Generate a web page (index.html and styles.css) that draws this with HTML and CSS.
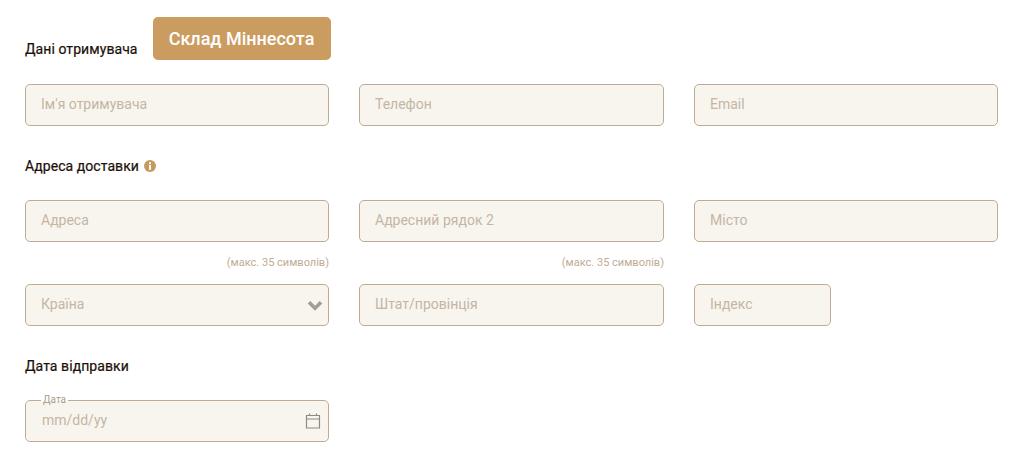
FILE: index.html
```html
<!DOCTYPE html>
<html lang="uk">
<head>
  <meta charset="UTF-8" />
  <meta name="viewport" content="width=device-width, initial-scale=1.0"/>
  <title>Дані отримувача</title>
  <link rel="stylesheet" href="styles.css">
</head>
<body>

<form class="shipping-form">

  <!-- Recipient -->
  <div class="recipient-head">
    <h3 class="section-title">Дані отримувача</h3>
    <button type="button" class="warehouse-btn">Склад Міннесота</button>
  </div>
  <div class="row row-recipient">
    <input class="field" type="text" placeholder="Ім'я отримувача" />
    <input class="field" type="text" placeholder="Телефон" />
    <input class="field" type="text" placeholder="Email" />
  </div>

  <!-- Address -->
  <h3 class="section-title title-address">
    Адреса доставки
    <svg class="info-icon" width="12" height="12" viewBox="0 0 12 12" aria-hidden="true">
      <circle cx="6" cy="6" r="6" fill="#c49a5f"/>
      <rect x="5" y="2.2" width="2" height="1.9" fill="#fff"/>
      <rect x="5" y="5" width="2" height="4.8" fill="#fff"/>
    </svg>
  </h3>
  <div class="row row-address">
    <div class="cell">
      <input class="field" type="text" placeholder="Адреса" />
      <span class="hint">(макс. 35 символів)</span>
    </div>
    <div class="cell">
      <input class="field" type="text" placeholder="Адресний рядок 2" />
      <span class="hint">(макс. 35 символів)</span>
    </div>
    <div class="cell">
      <input class="field" type="text" placeholder="Місто" />
    </div>
  </div>
  <div class="row row-region">
    <div class="select-wrap">
      <select class="field select-field">
        <option>Країна</option>
      </select>
      <svg class="select-arrow" width="16" height="11" viewBox="0 0 16 11" aria-hidden="true">
        <path d="M2 2.2 L8 8.2 L14 2.2" fill="none" stroke="#a39d94" stroke-width="3.6"/>
      </svg>
    </div>
    <input class="field" type="text" placeholder="Штат/провінція" />
    <input class="field field-zip" type="text" placeholder="Індекс" />
  </div>

  <!-- Date -->
  <h3 class="section-title title-date">Дата відправки</h3>
  <div class="row">
    <fieldset class="date-field">
      <legend class="date-legend">Дата</legend>
      <input class="date-input" type="text" placeholder="mm/dd/yy" />
      <svg class="calendar-icon" width="16" height="16" viewBox="0 0 16 16" aria-hidden="true">
        <path d="M1.5 2.5 H14.5 V15 H1.5 Z M1.5 6 H14.5 M4.5 0.5 V2.5 M11.5 0.5 V2.5" fill="none" stroke="#8f8a80" stroke-width="1.2"/>
      </svg>
    </fieldset>
  </div>

</form>

</body>
</html>
```

FILE: styles.css
```css
* { box-sizing: border-box; }
body { margin: 0; padding: 0; background: #fff; font-family: Roboto, "Liberation Sans", sans-serif; color: #1c1008; }
.shipping-form { width: 1024px; padding: 17px 26px 0 25px; }

.recipient-head { display: flex; align-items: flex-end; gap: 15px; }
.section-title { margin: 0; font-size: 14px; font-weight: 400; line-height: 20px; letter-spacing: 0.07px; color: #1c1008; -webkit-text-stroke: 0.2px #1c1008; }
.recipient-head .section-title { padding-bottom: 1px; }
.warehouse-btn { width: 178px; height: 43px; padding: 0; background: #cb9c60; color: #fff; border: none; border-radius: 5px; font-family: inherit; font-size: 18px; font-weight: 500; }

.row { display: grid; grid-template-columns: 304px 305px 304px; column-gap: 30px; }
.row-recipient { margin-top: 24px; }
.row-address { margin-top: 24px; }

.field { display: block; width: 100%; height: 42px; padding: 0 15px 2px; background: #f8f5ee; border: 1px solid #bfab94; border-radius: 5px; font-family: inherit; font-size: 14px; color: #c4b5a5; outline: none; }
.field::placeholder { color: #c4b5a5; opacity: 1; }
.field-zip { width: 137px; }

.title-address { margin-top: 30px; display: flex; align-items: center; gap: 5px; }
.title-date { margin-top: 30px; }
.info-icon { flex: none; }

.cell { display: flex; flex-direction: column; align-items: flex-end; height: 84px; }
.hint { margin-top: 14px; font-size: 11px; line-height: 14px; color: #bfab94; }

.select-wrap { position: relative; }
.select-field { appearance: none; -webkit-appearance: none; }
.select-arrow { position: absolute; right: 6px; top: 16px; pointer-events: none; }

.date-field { position: relative; margin: 19px 0 0; padding: 0 15px; height: 47px; background: #f8f5ee; background-clip: padding-box; border: 1px solid #bfab94; border-radius: 5px; min-width: 0; }
.date-legend { padding: 0 2px; font-size: 10px; line-height: 10px; color: #a89c8c; }
.date-input { display: block; width: 100%; height: 30px; padding: 0 0 0 1px; background: transparent; border: none; font-family: inherit; font-size: 14px; color: #c4b5a5; outline: none; }
.date-input::placeholder { color: #c4b5a5; opacity: 1; }
.calendar-icon { position: absolute; right: 7px; top: 8px; }
```
